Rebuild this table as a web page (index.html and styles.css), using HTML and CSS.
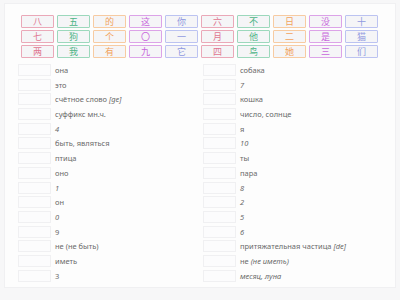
FILE: index.html
```html
<!DOCTYPE html>
<html>
<head>
<meta charset="utf-8">
<link rel="stylesheet" href="styles.css">
</head>
<body>
<div class="page">
  <div class="tiles">
    <div class="tile c1">八</div><div class="tile c2">五</div><div class="tile c3">的</div><div class="tile c4">这</div><div class="tile c5">你</div>
    <div class="tile c1">六</div><div class="tile c2">不</div><div class="tile c3">日</div><div class="tile c4">没</div><div class="tile c5">十</div>
    <div class="tile c1">七</div><div class="tile c2">狗</div><div class="tile c3">个</div><div class="tile c4">〇</div><div class="tile c5">一</div>
    <div class="tile c1">月</div><div class="tile c2">他</div><div class="tile c3">二</div><div class="tile c4">是</div><div class="tile c5">猫</div>
    <div class="tile c1">两</div><div class="tile c2">我</div><div class="tile c3">有</div><div class="tile c4">九</div><div class="tile c5">它</div>
    <div class="tile c1">四</div><div class="tile c2">鸟</div><div class="tile c3">她</div><div class="tile c4">三</div><div class="tile c5">们</div>
  </div>
  <div class="lists">
    <div class="col">
      <div class="item"><span class="box"></span><span class="txt">она</span></div>
      <div class="item"><span class="box"></span><span class="txt">это</span></div>
      <div class="item"><span class="box"></span><span class="txt">счётное слово <i>[ge]</i></span></div>
      <div class="item"><span class="box"></span><span class="txt">суффикс мн.ч.</span></div>
      <div class="item"><span class="box"></span><span class="txt"><i>4</i></span></div>
      <div class="item"><span class="box"></span><span class="txt">быть, являться</span></div>
      <div class="item"><span class="box"></span><span class="txt">птица</span></div>
      <div class="item"><span class="box"></span><span class="txt">оно</span></div>
      <div class="item"><span class="box"></span><span class="txt"><i>1</i></span></div>
      <div class="item"><span class="box"></span><span class="txt">он</span></div>
      <div class="item"><span class="box"></span><span class="txt"><i>0</i></span></div>
      <div class="item"><span class="box"></span><span class="txt">9</span></div>
      <div class="item"><span class="box"></span><span class="txt">не (не быть)</span></div>
      <div class="item"><span class="box"></span><span class="txt">иметь</span></div>
      <div class="item"><span class="box"></span><span class="txt">3</span></div>
    </div>
    <div class="col">
      <div class="item"><span class="box"></span><span class="txt">собака</span></div>
      <div class="item"><span class="box"></span><span class="txt"><i>7</i></span></div>
      <div class="item"><span class="box"></span><span class="txt">кошка</span></div>
      <div class="item"><span class="box"></span><span class="txt">число, солнце</span></div>
      <div class="item"><span class="box"></span><span class="txt">я</span></div>
      <div class="item"><span class="box"></span><span class="txt"><i>10</i></span></div>
      <div class="item"><span class="box"></span><span class="txt">ты</span></div>
      <div class="item"><span class="box"></span><span class="txt">пара</span></div>
      <div class="item"><span class="box"></span><span class="txt"><i>8</i></span></div>
      <div class="item"><span class="box"></span><span class="txt"><i>2</i></span></div>
      <div class="item"><span class="box"></span><span class="txt"><i>5</i></span></div>
      <div class="item"><span class="box"></span><span class="txt"><i>6</i></span></div>
      <div class="item"><span class="box"></span><span class="txt">притяжательная частица <i>[de]</i></span></div>
      <div class="item"><span class="box"></span><span class="txt">не <i>(не иметь)</i></span></div>
      <div class="item"><span class="box"></span><span class="txt"><i>месяц, луна</i></span></div>
    </div>
  </div>
</div>
</body>
</html>
```
FILE: styles.css
```css
html, body {
  margin: 0;
  padding: 0;
}
body {
  background: #f7f7f8;
  width: 400px;
  height: 300px;
  overflow: hidden;
  font-family: "Noto Sans", "DejaVu Sans", "Noto Sans CJK SC", sans-serif;
}
.page {
  margin: 3px 4px 0 4px;
  height: 285px;
  background: #fdfdfd;
  border: 1px solid #f0f0f2;
  padding-top: 11px;
  box-sizing: border-box;
}
.tiles {
  display: grid;
  grid-template-columns: repeat(10, 33px);
  grid-auto-rows: 13px;
  column-gap: 3px;
  row-gap: 2px;
  margin-left: 16px;
}
.tile {
  border: 1px solid;
  border-radius: 1px;
  background: #f5f5f7;
  font-family: "Noto Sans CJK SC", sans-serif;
  font-size: 9px;
  line-height: 11px;
  text-align: center;
}
.c1 { border-color: #eaa8b8; color: #e07590; }
.c2 { border-color: #9cd8bc; color: #4cb486; }
.c3 { border-color: #f7cba2; color: #f2a35c; }
.c4 { border-color: #dca3e8; color: #c865dc; }
.c5 { border-color: #bcc3f1; color: #8f99e0; }
.lists {
  display: grid;
  grid-template-columns: 185px 185px;
  margin-left: 13px;
  margin-top: 6px;
}
.col {
  display: flex;
  flex-direction: column;
  gap: 2.7px;
}
.item {
  display: flex;
  align-items: center;
  gap: 4px;
  height: 12px;
}
.box {
  width: 33px;
  height: 12px;
  box-sizing: border-box;
  border: 1px solid #f0f0f2;
  background: #fcfcfd;
  flex: none;
}
.txt {
  font-size: 7.5px;
  color: #6a6a6a;
  white-space: nowrap;
}
```
